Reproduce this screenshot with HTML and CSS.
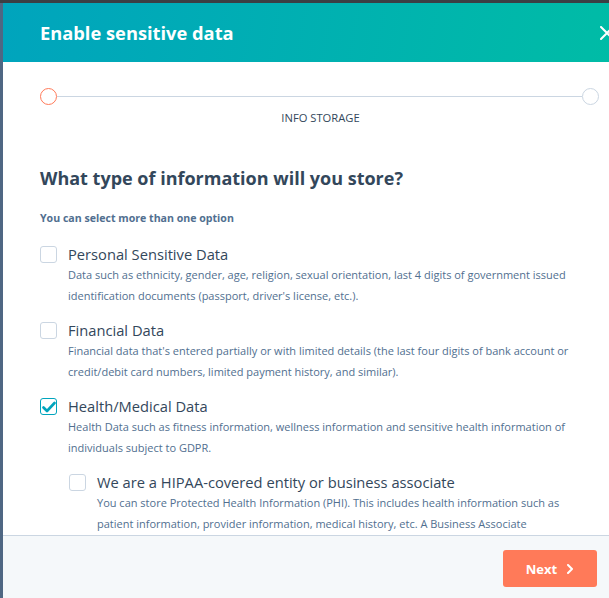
FILE: index.html
```html
<!DOCTYPE html>
<html>
<head>
<meta charset="utf-8">
<link rel="stylesheet" href="styles.css">
</head>
<body>
<div class="modal">
  <header class="modal-header">
    <h1 class="modal-title">Enable sensitive data</h1>
    <svg class="close" width="14" height="14" viewBox="0 0 14 14"><path d="M1 1 L13 13 M13 1 L1 13" stroke="#fff" stroke-width="2" stroke-linecap="round"/></svg>
  </header>
  <div class="modal-body">
    <div class="stepper">
      <span class="step step-active"></span>
      <span class="step-line"></span>
      <span class="step"></span>
    </div>
    <div class="step-label">INFO STORAGE</div>
    <h2 class="question">What type of information will you store?</h2>
    <p class="hint">You can select more than one option</p>

    <div class="option">
      <span class="checkbox"></span>
      <div class="option-text">
        <div class="option-label">Personal Sensitive Data</div>
        <div class="option-desc">Data such as ethnicity, gender, age, religion, sexual orientation, last 4 digits of government issued<br>identification documents (passport, driver's license, etc.).</div>
      </div>
    </div>

    <div class="option">
      <span class="checkbox"></span>
      <div class="option-text">
        <div class="option-label">Financial Data</div>
        <div class="option-desc">Financial data that's entered partially or with limited details (the last four digits of bank account or<br>credit/debit card numbers, limited payment history, and similar).</div>
      </div>
    </div>

    <div class="option">
      <span class="checkbox checked"><svg width="14" height="12" viewBox="0 0 14 12"><path d="M1.5 6.5 L5 10 L12.5 2" fill="none" stroke="#00a4bd" stroke-width="2.6" stroke-linecap="round" stroke-linejoin="round"/></svg></span>
      <div class="option-text">
        <div class="option-label">Health/Medical Data</div>
        <div class="option-desc">Health Data such as fitness information, wellness information and sensitive health information of<br>individuals subject to GDPR.</div>
      </div>
    </div>

    <div class="option option-nested">
      <span class="checkbox"></span>
      <div class="option-text">
        <div class="option-label">We are a HIPAA-covered entity or business associate</div>
        <div class="option-desc">You can store Protected Health Information (PHI). This includes health information such as<br>patient information, provider information, medical history, etc. A Business Associate</div>
      </div>
    </div>
  </div>
  <footer class="modal-footer">
    <button class="btn-next">Next <svg width="8" height="10" viewBox="0 0 8 10"><path d="M2 1 L6 5 L2 9" fill="none" stroke="#fff" stroke-width="2" stroke-linecap="round" stroke-linejoin="round"/></svg></button>
  </footer>
</div>
</body>
</html>
```

FILE: styles.css
```css
html, body {
  margin: 0;
  padding: 0;
  height: 100%;
  overflow: hidden;
}
*, *::before, *::after {
  box-sizing: border-box;
}
body {
  background: #4f6783;
  border-top: 3px solid #3b3f44;
  padding-left: 3px;
  font-family: "Open Sans", Lato, sans-serif;
  color: #33475b;
}
.modal {
  width: 636px;
  height: 595px;
  background: #fff;
  display: flex;
  flex-direction: column;
}
.modal-header {
  flex: 0 0 59px;
  background: linear-gradient(100deg, #00a4bd 0%, #00bda5 100%);
  display: flex;
  align-items: center;
  justify-content: space-between;
  padding: 0 25px 0 37px;
}
.modal-title {
  margin: 0;
  color: #fff;
  font-size: 18.3px;
  font-weight: 700;
  line-height: 24px;
}
.close {
  display: block;
}
.modal-body {
  flex: 1;
  overflow: hidden;
  padding: 26px 40px 0 37px;
}
.stepper {
  display: flex;
  align-items: center;
}
.step {
  width: 17px;
  height: 17px;
  border-radius: 50%;
  border: 1.5px solid #cbd6e2;
  background: #fff;
  flex: 0 0 auto;
}
.step-active {
  border-color: #ff7a59;
}
.step-line {
  flex: 1;
  height: 1px;
  background: #cbd6e2;
}
.step-label {
  text-align: center;
  font-size: 11.2px;
  line-height: 14px;
  margin-top: 6px;
  padding-left: 2px;
}
.question {
  margin: 41px 0 0;
  font-size: 18px;
  line-height: 24px;
  font-weight: 700;
}
.hint {
  margin: 20px 0 0;
  font-size: 10.6px;
  line-height: 16px;
  font-weight: 700;
  color: #516f90;
}
.option {
  display: flex;
  gap: 11px;
  margin-top: 14px;
}
.hint + .option {
  margin-top: 18px;
}
.option-nested {
  margin-left: 29px;
}
.checkbox {
  flex: 0 0 auto;
  width: 17px;
  height: 17px;
  border: 1px solid #cbd6e2;
  border-radius: 3px;
  background: #fff;
  display: flex;
  align-items: center;
  justify-content: center;
  margin-top: 2px;
}
.checkbox.checked {
  border: 1.5px solid #00a4bd;
}
.option-label {
  font-size: 14.7px;
  line-height: 20px;
}
.option-desc {
  font-size: 11px;
  line-height: 21px;
  color: #516f90;
  white-space: nowrap;
}
.modal-footer {
  flex: 0 0 63px;
  border-top: 1px solid #cbd6e2;
  background: #f5f8fa;
  display: flex;
  align-items: flex-start;
  padding: 14px 0 0 500px;
}
.btn-next {
  width: 94px;
  height: 37px;
  border: none;
  border-radius: 3px;
  background: #ff7a59;
  color: #fff;
  font-family: inherit;
  font-size: 13px;
  font-weight: 700;
  display: flex;
  align-items: center;
  justify-content: center;
  gap: 9px;
  padding: 0;
}
```
